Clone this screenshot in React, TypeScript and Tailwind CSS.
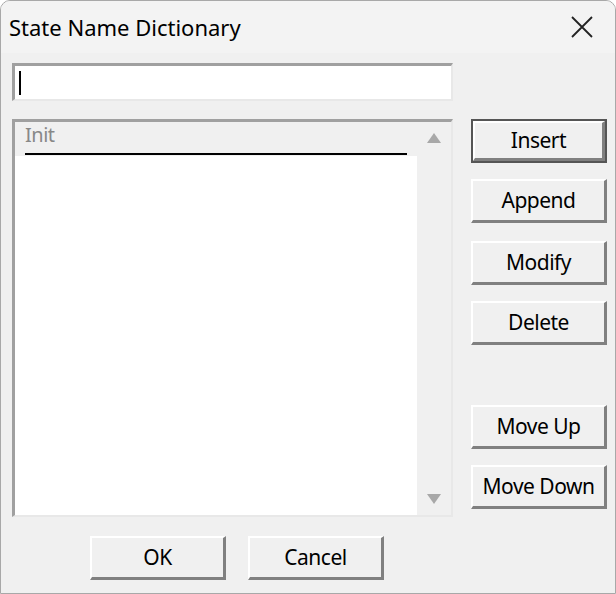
import React from "react";

const Btn = ({ label, def }: { label: string; def?: boolean }) => (
  <div className={`h-[44px] w-[136px] ${def ? "border-2 border-[#555]" : ""} flex`}>
    <div className="flex-1 flex items-center justify-center bg-[#f0f0f0] border-t-2 border-l-2 border-white border-b-[3px] border-r-[3px] border-b-[#808080] border-r-[#808080] text-[21px] text-black tracking-[-0.5px] [font-family:'Liberation_Sans',sans-serif]">
      {label}
    </div>
  </div>
);

export default function App() {
  return (
    <div className="w-[616px] h-[594px] bg-[#f0f0f0] rounded-t-[10px] border border-[#a8a8a8] flex flex-col overflow-hidden [font-family:'Liberation_Sans',sans-serif]">
      <div className="h-[52px] bg-[#f3f3f3] flex items-center justify-between pl-[8px] pr-[22px] shrink-0">
        <span className="text-[22px] text-black [font-family:'Open_Sans',sans-serif]">State Name Dictionary</span>
        <svg width="22" height="22" viewBox="0 0 22 22"><path d="M1 1L21 21M21 1L1 21" stroke="#222" strokeWidth="1.8" /></svg>
      </div>
      <div className="flex pl-[11px] pt-[10px] gap-[18px]">
        <div className="flex flex-col gap-[18px]">
          <div className="w-[441px] h-[38px] bg-white border-t-[3px] border-l-[3px] border-[#a0a0a0] border-b-2 border-r-2 border-b-[#e8e8e8] border-r-[#e8e8e8] flex items-center pl-[4px]">
            <div className="w-[2px] h-[24px] bg-black" />
          </div>
          <div className="w-[441px] h-[398px] bg-white border-t-[3px] border-l-[3px] border-[#a0a0a0] border-b-2 border-r-2 border-b-[#e8e8e8] border-r-[#e8e8e8] flex">
            <div className="flex-1 flex flex-col">
              <div className="h-[34px] bg-[#f0f0f0] flex flex-col justify-between pl-[10px] pr-[10px] pt-[1px]">
                <span className="text-[20px] text-[#888] leading-[24px] tracking-[-0.5px] [font-family:'Liberation_Sans',sans-serif]">Init</span>
                <div className="h-[2px] bg-black mb-[1px]" />
              </div>
            </div>
            <div className="w-[34px] bg-[#f0f0f0] flex flex-col items-center justify-between py-[10px]">
              <svg width="16" height="12" viewBox="0 0 16 12"><path d="M8 1L15 11H1Z" fill="#a8a8a8" /></svg>
              <svg width="16" height="12" viewBox="0 0 16 12"><path d="M8 11L15 1H1Z" fill="#a8a8a8" /></svg>
            </div>
          </div>
        </div>
        <div className="flex flex-col pt-[56px]">
          <Btn label="Insert" def />
          <div className="h-[16px]" />
          <Btn label="Append" />
          <div className="h-[18px]" />
          <Btn label="Modify" />
          <div className="h-[16px]" />
          <Btn label="Delete" />
          <div className="h-[60px]" />
          <Btn label="Move Up" />
          <div className="h-[16px]" />
          <Btn label="Move Down" />
        </div>
      </div>
      <div className="flex gap-[22px] pl-[89px] pt-[19px]">
        <Btn label="OK" />
        <Btn label="Cancel" />
      </div>
    </div>
  );
}
